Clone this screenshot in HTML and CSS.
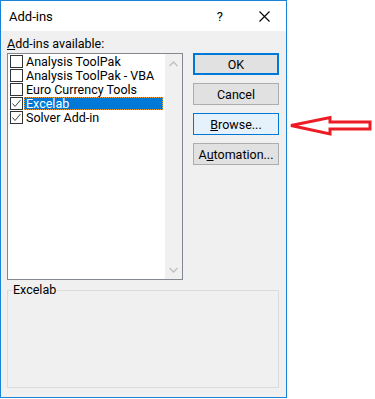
FILE: index.html
```html
<!DOCTYPE html>
<html lang="en">

<head>
    <meta charset="UTF-8">
    <meta name="viewport" content="width=device-width, initial-scale=1.0">
    <title>Add-ins</title>
    <link rel="stylesheet" href="styles.css">
</head>

<body>
    <div class="dialog">
        <div class="titlebar">
            <span class="title">Add-ins</span>
            <span class="help">?</span>
            <svg class="close" width="11" height="11" viewBox="0 0 11 11">
                <path d="M0.5 0.5 L10.5 10.5 M10.5 0.5 L0.5 10.5" stroke="#000" stroke-width="1.1" fill="none"/>
            </svg>
        </div>

        <div class="dialog-body">
            <div class="main">
                <div class="list-col">
                    <div class="label"><u>A</u>dd-ins available:</div>
                    <div class="listbox">
                        <div class="items">
                            <div class="item">
                                <span class="check"></span>
                                <span class="item-text">Analysis ToolPak</span>
                            </div>
                            <div class="item">
                                <span class="check"></span>
                                <span class="item-text">Analysis ToolPak - VBA</span>
                            </div>
                            <div class="item">
                                <span class="check"></span>
                                <span class="item-text">Euro Currency Tools</span>
                            </div>
                            <div class="item selected">
                                <span class="check">
                                    <svg width="11" height="11" viewBox="0 0 11 11"><path d="M1.5 5.5 L4 8.5 L9.5 2" stroke="#444" stroke-width="1" fill="none"/></svg>
                                </span>
                                <span class="item-text">Excelab</span>
                            </div>
                            <div class="item">
                                <span class="check">
                                    <svg width="11" height="11" viewBox="0 0 11 11"><path d="M1.5 5.5 L4 8.5 L9.5 2" stroke="#444" stroke-width="1" fill="none"/></svg>
                                </span>
                                <span class="item-text">Solver Add-in</span>
                            </div>
                        </div>
                        <div class="scrollbar">
                            <svg width="9" height="6" viewBox="0 0 9 6"><path d="M0.5 5 L4.5 1 L8.5 5" stroke="#c2c2c2" stroke-width="1.5" fill="none"/></svg>
                            <svg width="9" height="6" viewBox="0 0 9 6"><path d="M0.5 1 L4.5 5 L8.5 1" stroke="#c2c2c2" stroke-width="1.5" fill="none"/></svg>
                        </div>
                    </div>
                </div>

                <div class="buttons">
                    <button class="btn default">OK</button>
                    <button class="btn">Cancel</button>
                    <button class="btn hover"><u>B</u>rowse...</button>
                    <button class="btn">A<u>u</u>tomation...</button>
                </div>
            </div>

            <fieldset class="group">
                <legend>Excelab</legend>
            </fieldset>
        </div>
    </div>

    <svg class="arrow" width="86" height="24" viewBox="0 0 86 24">
        <polygon points="2,11.5 41,3.5 41,8 81,8 81,15 41,15 41,20" fill="none" stroke="#ed1c24" stroke-width="3" stroke-linejoin="miter"/>
    </svg>
</body>

</html>
```

FILE: styles.css
```css
body {
    margin: 0;
    background-color: #fff;
    font-family: Roboto, "Noto Sans", sans-serif;
    font-size: 12.5px;
    color: #000;
    display: flex;
    align-items: flex-start;
}

.dialog {
    width: 287px;
    height: 398px;
    box-sizing: border-box;
    border: 1px solid #1883d7;
    background-color: #f0f0f0;
    display: flex;
    flex-direction: column;
}

.titlebar {
    height: 30px;
    background-color: #fff;
    display: flex;
    align-items: center;
}

.title {
    font-size: 13px;
    margin-left: 8px;
    flex: 1;
}

.help {
    font-size: 13px;
    margin-right: 36px;
}

.close {
    margin-right: 16px;
}

.dialog-body {
    padding: 5px 6px 0 6px;
}

.main {
    display: flex;
    align-items: flex-start;
}

.list-col {
    width: 176px;
}

.label {
    height: 16px;
    line-height: 16px;
    margin-bottom: 1px;
}

.listbox {
    height: 227px;
    box-sizing: border-box;
    border: 1px solid #828790;
    background-color: #fff;
    display: flex;
}

.items {
    flex: 1;
    padding: 1px 2px 0 2px;
}

.item {
    height: 14px;
    display: flex;
    align-items: flex-start;
}

.check {
    width: 13px;
    height: 13px;
    box-sizing: border-box;
    border: 1px solid #333;
    background-color: #fff;
    display: flex;
    align-items: center;
    justify-content: center;
    flex-shrink: 0;
}

.item-text {
    flex: 1;
    height: 13px;
    line-height: 13px;
    margin-left: 1px;
    padding-left: 2px;
}

.item.selected .item-text {
    background-color: #0078d7;
    color: #fff;
    outline: 1px dotted #f0a030;
    outline-offset: -1px;
}

.scrollbar {
    width: 17px;
    background-color: #f0f0f0;
    display: flex;
    flex-direction: column;
    justify-content: space-between;
    align-items: center;
    padding: 7px 0 6px 0;
}

.buttons {
    margin-left: 10px;
    margin-top: 17px;
    display: flex;
    flex-direction: column;
    gap: 8px;
}

.btn {
    width: 86px;
    height: 22px;
    box-sizing: border-box;
    border: 1px solid #adadad;
    background-color: #e1e1e1;
    font-family: Roboto, "Noto Sans", sans-serif;
    font-size: 12.5px;
    color: #000;
    padding: 0;
}

.btn.default {
    border: 2px solid #0078d7;
}

.btn.hover {
    border-color: #0078d7;
    background-color: #e5f1fb;
}

.group {
    margin: 4px 0 0 0;
    height: 104px;
    box-sizing: border-box;
    width: 272px;
    border: 1px solid #dcdcdc;
    padding: 0;
}

.group legend {
    margin-left: 4px;
    padding: 0 1px;
    line-height: 12px;
}

.arrow {
    margin-top: 114px;
    margin-left: 2px;
}
```
